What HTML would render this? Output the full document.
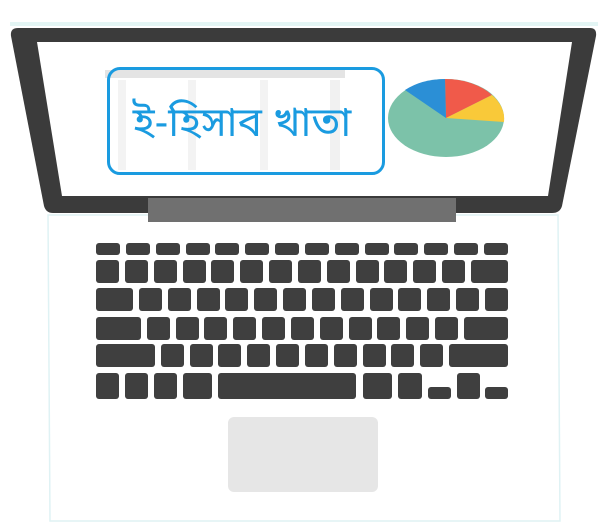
<!DOCTYPE html>
<html><head><meta charset="utf-8"><style>
body{margin:0;width:607px;height:523px;background:#fff;position:relative;overflow:hidden;font-family:"Liberation Sans",sans-serif}
.kb{position:absolute;left:96px;width:412px}
.row{display:flex;justify-content:space-between;position:absolute;left:0;width:412px}
.row div{background:#3f3f3f;border-radius:3px;flex:none}
.t{position:absolute;left:107px;top:67px;width:278px;height:108px;box-sizing:border-box;border:3px solid #1a9be0;border-radius:13px;color:#1a9be0;font-family:"Liberation Sans","Noto Sans Bengali","Lohit Bengali","FreeSans",sans-serif;font-size:41px;text-align:center;line-height:104px;padding-right:8px}
</style></head><body>
<svg width="607" height="523" style="position:absolute;left:0;top:0">
 <path d="M10 24 L598 24" stroke="#e3f5f4" stroke-width="4"/>
 <path d="M48 215 L558 215 L560 521 L50 521 Z" fill="#fff" stroke="#dff2f4" stroke-width="1.5"/>
 <path d="M18 28 L590 28 Q597 28 596 36 L562 206 Q560 213 552 213 L53 213 Q46 213 44 206 L11 36 Q10 28 18 28 Z" fill="#3b3b3b"/>
 <path d="M37 42 L572 42 L548 196 L62 196 Z" fill="#fff"/>
 <rect x="148" y="198" width="308" height="24" fill="#707070"/>
 <rect x="105" y="70" width="240" height="8" fill="#e4e4e4"/>
 <rect x="118" y="80" width="8" height="90" fill="#f3f3f3"/><rect x="188" y="80" width="8" height="90" fill="#f3f3f3"/><rect x="260" y="80" width="8" height="90" fill="#f3f3f3"/><rect x="330" y="80" width="10" height="90" fill="#f1f1f1"/>
 <ellipse cx="446" cy="118" rx="58" ry="39" fill="#7cc2a9"/>
 <path d="M446 118 L445 79 A58 39 0 0 1 492 95 Z" fill="#f05a4a"/>
 <path d="M446 118 L492 95 A58 39 0 0 1 504 122 Z" fill="#f9c939"/>
 <path d="M446 118 L405 90 A58 39 0 0 1 445 79 Z" fill="#2b8fd6"/>
 <rect x="228" y="417" width="150" height="75" rx="6" fill="#e6e6e6"/>
</svg>
<div class="t">ই-হিসাব খাতা</div>
<div class="kb" style="top:0">
 <div class="row" style="top:243px;height:12px"><div style="width:24px;height:12px"></div><div style="width:24px;height:12px"></div><div style="width:24px;height:12px"></div><div style="width:24px;height:12px"></div><div style="width:24px;height:12px"></div><div style="width:24px;height:12px"></div><div style="width:24px;height:12px"></div><div style="width:24px;height:12px"></div><div style="width:24px;height:12px"></div><div style="width:24px;height:12px"></div><div style="width:24px;height:12px"></div><div style="width:24px;height:12px"></div><div style="width:24px;height:12px"></div><div style="width:24px;height:12px"></div></div>
 <div class="row" style="top:260px"><div style="width:23px;height:23px"></div><div style="width:23px;height:23px"></div><div style="width:23px;height:23px"></div><div style="width:23px;height:23px"></div><div style="width:23px;height:23px"></div><div style="width:23px;height:23px"></div><div style="width:23px;height:23px"></div><div style="width:23px;height:23px"></div><div style="width:23px;height:23px"></div><div style="width:23px;height:23px"></div><div style="width:23px;height:23px"></div><div style="width:23px;height:23px"></div><div style="width:23px;height:23px"></div><div style="width:37px;height:23px"></div></div>
 <div class="row" style="top:288px"><div style="width:37px;height:23px"></div><div style="width:23px;height:23px"></div><div style="width:23px;height:23px"></div><div style="width:23px;height:23px"></div><div style="width:23px;height:23px"></div><div style="width:23px;height:23px"></div><div style="width:23px;height:23px"></div><div style="width:23px;height:23px"></div><div style="width:23px;height:23px"></div><div style="width:23px;height:23px"></div><div style="width:23px;height:23px"></div><div style="width:23px;height:23px"></div><div style="width:23px;height:23px"></div><div style="width:23px;height:23px"></div></div>
 <div class="row" style="top:317px"><div style="width:45px;height:23px"></div><div style="width:23px;height:23px"></div><div style="width:23px;height:23px"></div><div style="width:23px;height:23px"></div><div style="width:23px;height:23px"></div><div style="width:23px;height:23px"></div><div style="width:23px;height:23px"></div><div style="width:23px;height:23px"></div><div style="width:23px;height:23px"></div><div style="width:23px;height:23px"></div><div style="width:23px;height:23px"></div><div style="width:23px;height:23px"></div><div style="width:44px;height:23px"></div></div>
 <div class="row" style="top:344px"><div style="width:59px;height:23px"></div><div style="width:23px;height:23px"></div><div style="width:23px;height:23px"></div><div style="width:23px;height:23px"></div><div style="width:23px;height:23px"></div><div style="width:23px;height:23px"></div><div style="width:23px;height:23px"></div><div style="width:23px;height:23px"></div><div style="width:23px;height:23px"></div><div style="width:23px;height:23px"></div><div style="width:23px;height:23px"></div><div style="width:59px;height:23px"></div></div>
</div>
<svg width="607" height="523" style="position:absolute;left:0;top:0" fill="#3f3f3f">
 <rect x="96" y="373" width="23" height="26" rx="3"/><rect x="125" y="373" width="23" height="26" rx="3"/><rect x="154" y="373" width="23" height="26" rx="3"/><rect x="183" y="373" width="29" height="26" rx="3"/><rect x="218" y="373" width="138" height="26" rx="3"/><rect x="363" y="373" width="29" height="26" rx="3"/><rect x="398" y="373" width="24" height="26" rx="3"/><rect x="428" y="387" width="23" height="12" rx="3"/><rect x="457" y="373" width="23" height="26" rx="3"/><rect x="485" y="387" width="23" height="12" rx="3"/>
</svg>
</body></html>
